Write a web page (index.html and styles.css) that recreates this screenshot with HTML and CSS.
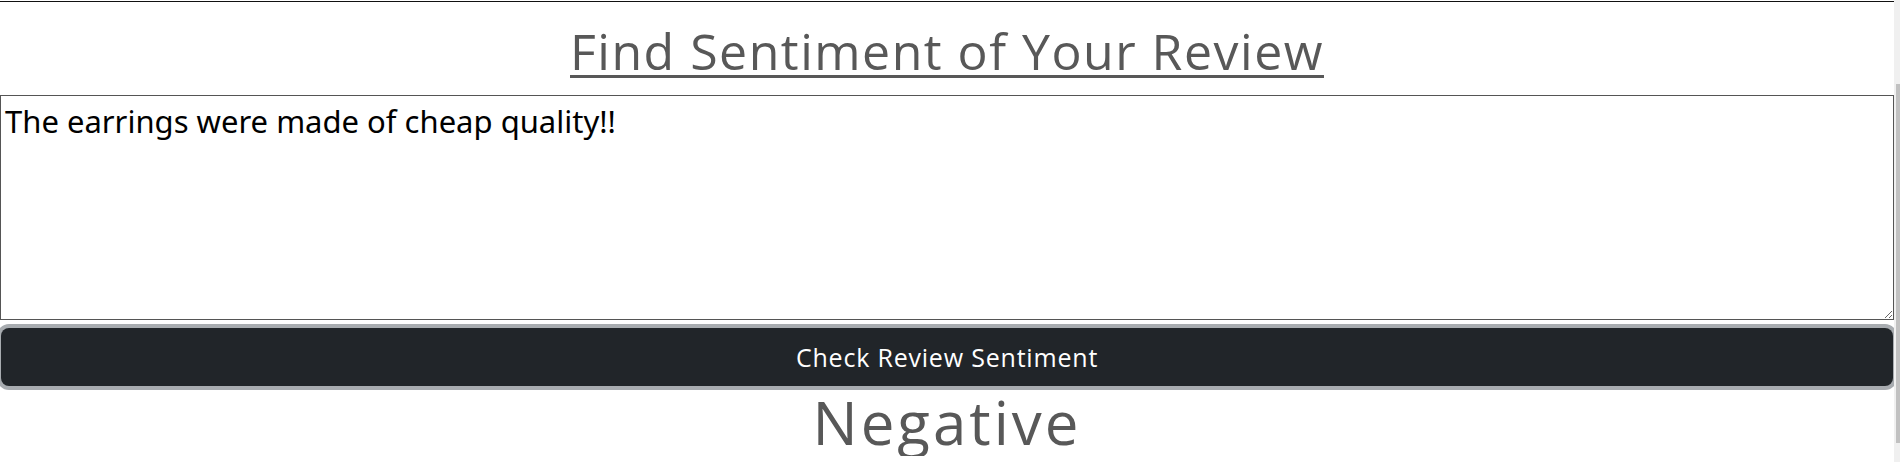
FILE: index.html
```html
<!DOCTYPE html>
<html lang="en">
<head>
<meta charset="utf-8">
<title>Find Sentiment of Your Review</title>
<link rel="stylesheet" href="styles.css">
</head>
<body>
<div class="page">
  <div class="topline"></div>
  <h2 class="title">Find Sentiment of Your Review</h2>
  <form class="review-form">
    <textarea class="review-input" name="review">The earrings were made of cheap quality!!</textarea>
    <button type="button" class="btn-check">Check Review Sentiment</button>
  </form>
  <h1 class="result">Negative</h1>
</div>
<div class="scrollbar"><div class="scrollbar-thumb"></div></div>
</body>
</html>
```

FILE: styles.css
```css
html, body {
  margin: 0;
  padding: 0;
  background: #ffffff;
  overflow: hidden;
}

body {
  font-family: "Open Sans", "Liberation Sans", sans-serif;
}

.page {
  width: 1894px;
  display: flex;
  flex-direction: column;
}

.topline {
  margin-top: 1px;
  height: 1px;
  background: #111111;
}

.title {
  margin: 0;
  padding-top: 21px;
  height: 93px;
  box-sizing: border-box;
  text-align: center;
  font-size: 50px;
  font-weight: 400;
  letter-spacing: 1.5px;
  line-height: 56px;
  color: #585858;
  text-decoration: underline;
  text-decoration-thickness: 3px;
  text-underline-offset: 5px;
}

.review-form {
  display: flex;
  flex-direction: column;
  margin: 0;
}

.review-input {
  display: block;
  box-sizing: border-box;
  width: 100%;
  height: 225px;
  margin: 0;
  padding: 5px 4px 2px;
  border: 1px solid #555555;
  font-family: "Noto Sans", "Open Sans", sans-serif;
  font-size: 31px;
  line-height: 1.35;
  color: #000000;
  background: #ffffff;
  resize: vertical;
}

.btn-check {
  margin: 8px 0 0 1px;
  height: 58px;
  width: 1892px;
  border: none;
  border-radius: 8px;
  background: #212529;
  color: #ffffff;
  font-family: "Open Sans", "Liberation Sans", sans-serif;
  font-size: 25px;
  letter-spacing: 0.8px;
  box-shadow: 0 0 0 4px #a8acb0;
}

.result {
  margin: 2px 0 0;
  text-align: center;
  font-size: 60px;
  font-weight: 400;
  letter-spacing: 3px;
  line-height: 68px;
  color: #585858;
}

.scrollbar {
  position: fixed;
  top: 0;
  right: 0;
  width: 6px;
  height: 462px;
  background: #f0f0f0;
}

.scrollbar-thumb {
  position: absolute;
  top: 84px;
  right: 0;
  width: 4px;
  height: 359px;
  background: #c1c1c1;
}
```
